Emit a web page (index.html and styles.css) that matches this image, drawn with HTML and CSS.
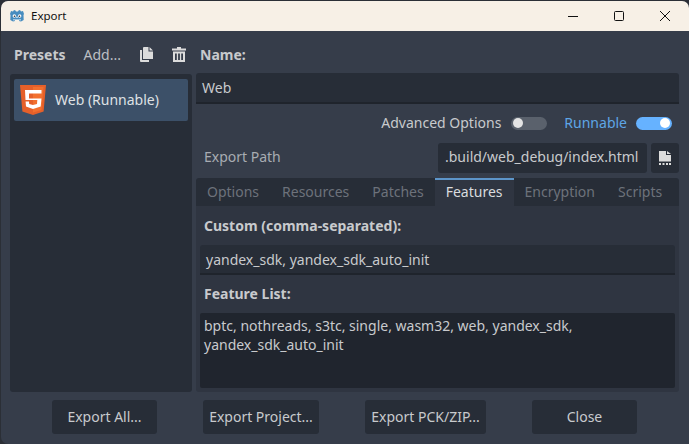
FILE: index.html
```html
<!DOCTYPE html>
<html lang="en">
<head>
<meta charset="utf-8">
<title>Export</title>
<link rel="stylesheet" href="styles.css">
</head>
<body>
<div class="window">
  <header class="titlebar">
    <svg class="app-icon" width="16" height="16" viewBox="0 0 16 16"><path fill="#478cbf" d="M1 6l1-3 2 .5L5 2l1.500.5.500 1h2l.5-1L11 2l1 1.500L14 3l1 3-.5 1 .2 5-2.700 1.500-2-.5v-1H6v1l-2 .5L1.300 12l.2-5z"/><circle cx="5.300" cy="8" r="1.700" fill="#fff"/><circle cx="10.700" cy="8" r="1.700" fill="#fff"/><circle cx="5.500" cy="8.200" r=".8" fill="#333"/><circle cx="10.500" cy="8.200" r=".8" fill="#333"/><path fill="#fff" d="M7.400 8.500h1.200v1.500H7.400zM4 11.500h8v.8H4z"/></svg>
    <span class="title">Export</span>
    <div class="controls">
      <svg width="12" height="12" viewBox="0 0 12 12"><path d="M1 6.500h10" stroke="#111" fill="none"/></svg>
      <svg width="12" height="12" viewBox="0 0 12 12"><rect x="1.500" y="1.500" width="9" height="9" rx="1" stroke="#111" fill="none"/></svg>
      <svg width="12" height="12" viewBox="0 0 12 12"><path d="M1 1l10 10M11 1L1 11" stroke="#111" fill="none"/></svg>
    </div>
  </header>
  <div class="body">
    <div class="main">
      <aside class="left">
        <div class="presets-bar">
          <strong class="bold">Presets</strong>
          <span class="add">Add...</span>
          <svg class="tool" width="13" height="15" viewBox="0 0 13 15"><path fill="#dcdcdc" d="M4 0h4.500v4.500H13V12H3V1a1 1 0 0 1 1-1zM9.500 0L13 3.500H9.500zM0 3h2v10h7v2H1a1 1 0 0 1-1-1z"/></svg>
          <svg class="tool" width="14" height="15" viewBox="0 0 14 15"><path fill="#dcdcdc" fill-rule="evenodd" d="M5 0h4v1.500h5v2H0v-2h5zM1 4.500h12V15H1zM3 6.500v6.500h1.800V6.500zM6.100 6.500v6.500h1.800V6.500zM9.200 6.500v6.500H11V6.500z"/></svg>
        </div>
        <div class="list">
          <div class="item">
            <svg width="26" height="30" viewBox="0 0 26 30"><path fill="#e5602a" d="M0 0h26l-2.400 26.500L13 30 2.400 26.500z"/><path fill="#f2702f" d="M13 2v25.500l8.500-2.500L23.500 2z"/><path fill="#fff" d="M5 5h16.500v3.500H9v5h12.500l-.8 8-7.700 2.500-7-2.500-.4-5h3.400l.2 2.500 3.800 1 4-1 .3-4H5.500z"/></svg>
            <span>Web (Runnable)</span>
          </div>
        </div>
      </aside>
      <section class="right">
        <div class="bold name-label">Name:</div>
        <div class="field name-field">Web</div>
        <div class="options-row">
          <span class="opt">Advanced Options</span>
          <span class="toggle"><span class="knob"></span></span>
          <span class="runnable">Runnable</span>
          <span class="toggle on"><span class="knob"></span></span>
        </div>
        <div class="path-row">
          <span class="path-label">Export Path</span>
          <span class="path-field">.build/web_debug/index.html</span>
          <span class="file-btn"><svg width="12" height="14" viewBox="0 0 12 14"><path fill="#dcdcdc" d="M0 0h7v4h5v6.500H0zM8 0l4 3H8zM0 12h2v2H0zM3.500 12h2v2h-2zM7 12h2v2H7zM10 12h2v2h-2z"/></svg></span>
        </div>
        <div class="tabs">
          <span class="tab">Options</span>
          <span class="tab">Resources</span>
          <span class="tab">Patches</span>
          <span class="tab active">Features</span>
          <span class="tab">Encryption</span>
          <span class="tab">Scripts</span>
        </div>
        <div class="tab-panel">
          <div class="bold panel-label">Custom (comma-separated):</div>
          <div class="field custom-field">yandex_sdk, yandex_sdk_auto_init</div>
          <div class="bold panel-label list-label">Feature List:</div>
          <div class="feature-list">bptc, nothreads, s3tc, single, wasm32, web, yandex_sdk, yandex_sdk_auto_init</div>
        </div>
      </section>
    </div>
    <footer class="buttons">
      <button class="btn w-all">Export All...</button>
      <button class="btn w-project">Export Project...</button>
      <button class="btn w-pck">Export PCK/ZIP...</button>
      <button class="btn w-close">Close</button>
    </footer>
  </div>
</div>
</body>
</html>
```
FILE: styles.css
```css
* { box-sizing: border-box; }
html, body { margin: 0; height: 100%; }
body {
  background: #2b2f36;
  font: 14px/20px "Noto Sans", sans-serif;
  color: #c8cacd;
  overflow: hidden;
}
.window {
  width: 688px;
  height: 443px;
  margin-left: 1px;
  margin-top: 1px;
  border-radius: 7px 7px 0 7px;
  overflow: hidden;
  background: #363d4a;
  display: flex;
  flex-direction: column;
}
.titlebar {
  height: 30px;
  flex: none;
  background: #f7f0e6;
  display: flex;
  align-items: center;
  padding-left: 8px;
  color: #111;
  font-size: 11.5px;
}
.app-icon { flex: none; }
.title { margin-left: 6px; }
.controls {
  margin-left: auto;
  display: flex;
  gap: 34px;
  padding-right: 18px;
  align-items: center;
}
.body {
  flex: 1;
  display: flex;
  flex-direction: column;
  padding: 0 10px 0 9px;
}
.main { display: flex; gap: 4px; height: 361px; }
.left { width: 182px; flex: none; display: flex; flex-direction: column; }
.presets-bar {
  height: 43px;
  display: flex;
  align-items: center;
  padding: 4px 0 0 4px;
}
.bold { font-weight: 700; color: #c8cacd; }
.add { margin-left: 18px; color: #bcbfc3; }
.tool { margin-left: 19px; }
.list {
  flex: 1;
  background: #272d37;
  border-radius: 3px;
  padding: 5px 4px;
}
.item {
  height: 42px;
  background: #3c5068;
  border-radius: 2px;
  display: flex;
  align-items: center;
  padding-left: 6px;
  gap: 9px;
  color: #dfe1e4;
}
.right { flex: 1; min-width: 0; display: flex; flex-direction: column; }
.name-label { height: 42px; padding: 14px 0 0 4px; }
.field {
  background: #272d37;
  border-bottom: 2px solid #1f242c;
  border-radius: 3px 3px 0 0;
  padding-left: 6px;
  display: flex;
  align-items: center;
}
.name-field { height: 31px; }
.options-row {
  height: 39px;
  display: flex;
  align-items: center;
  justify-content: flex-end;
  padding: 0 7px 1px 0;
}
.opt { color: #c8cacd; margin-right: 10px; }
.runnable { color: #5ea6e6; margin: 0 9px 0 17px; }
.toggle {
  width: 36px;
  height: 13px;
  border-radius: 7px;
  background: #5a616c;
  display: flex;
  align-items: center;
  padding: 0 2px;
}
.knob { width: 10px; height: 10px; border-radius: 50%; background: #e4e4e4; }
.toggle.on { background: #66b2ff; justify-content: flex-end; }
.toggle.on .knob { background: #fff; }
.path-row { height: 30px; display: flex; align-items: center; }
.path-label { margin: 0 0 2px 8px; color: #a8acb2; flex: 1; }
.path-field {
  width: 209px;
  height: 30px;
  background: #272d37;
  border-radius: 3px;
  padding-left: 7px;
  line-height: 28px;
  white-space: nowrap;
}
.file-btn {
  width: 28px;
  height: 30px;
  margin-left: 4px;
  background: #272d37;
  border-radius: 3px;
  display: flex;
  align-items: center;
  justify-content: center;
}
.tabs {
  margin-top: 5px;
  height: 28px;
  background: #272d37;
  display: flex;
  border-radius: 3px 3px 0 0;
}
.tab { color: #6d727b; padding: 4px 11px 0; }
.tab + .tab { margin-left: 1px; }
.tab.active {
  background: #2f3541;
  border-top: 2px solid #5d95c9;
  color: #d9dbde;
  padding-top: 2px;
  margin-left: 0;
}
.tab.active + .tab { margin-left: 0; }
.tab-panel {
  flex: 1;
  background: #2f3541;
  padding: 9px 4px 4px;
  display: flex;
  flex-direction: column;
  border-radius: 0 0 3px 3px;
}
.panel-label { padding: 1px 0 0 4px; height: 30px; }
.custom-field { height: 30px; flex: none; padding-top: 2px; }
.list-label { padding-top: 9px; height: 38px; }
.feature-list {
  flex: 1;
  background: #20252e;
  padding: 3px 4px 0;
  border-radius: 2px;
  line-height: 19px;
}
.buttons { height: 52px; display: flex; padding: 8px 0 0 42px; }
.btn {
  height: 34px;
  background: #272d37;
  border: 0;
  border-radius: 3px;
  color: #c8cacd;
  font: inherit;
  padding: 0;
  white-space: nowrap;
}
.w-all { width: 105px; }
.w-project { width: 116px; margin-left: 46px; }
.w-pck { width: 121px; margin-left: 46px; }
.w-close { width: 105px; margin-left: 46px; }
```
